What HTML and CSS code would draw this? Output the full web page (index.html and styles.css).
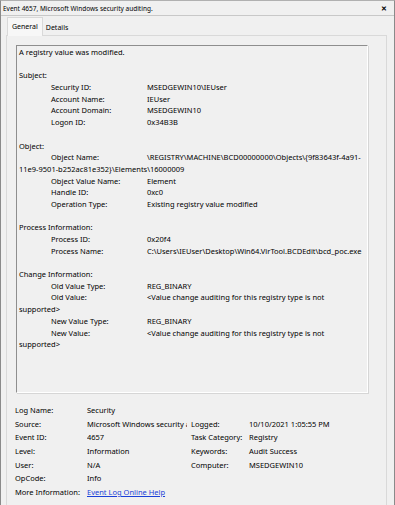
FILE: index.html
```html
<!DOCTYPE html>
<html>
<head>
<meta charset="utf-8">
<link rel="stylesheet" href="styles.css">
</head>
<body>
<div class="window">
  <div class="titlebar">
    <span class="title">Event 4657, Microsoft Windows security auditing.</span>
    <span class="close">&#x2715;</span>
  </div>
  <div class="tabs">
    <div class="tab active">General</div>
    <div class="tab">Details</div>
  </div>
  <div class="panel">
    <div class="textbox">
      <div class="ln">A registry value was modified.</div>
      <div class="ln">&nbsp;</div>
      <div class="ln">Subject:</div>
      <div class="ln"><span class="ind"></span><span class="lbl">Security ID:</span>MSEDGEWIN10\IEUser</div>
      <div class="ln"><span class="ind"></span><span class="lbl">Account Name:</span>IEUser</div>
      <div class="ln"><span class="ind"></span><span class="lbl">Account Domain:</span>MSEDGEWIN10</div>
      <div class="ln"><span class="ind"></span><span class="lbl">Logon ID:</span>0x34B3B</div>
      <div class="ln">&nbsp;</div>
      <div class="ln">Object:</div>
      <div class="ln"><span class="ind"></span><span class="lbl">Object Name:</span>\REGISTRY\MACHINE\BCD00000000\Objects\{9f83643f-4a91-<br>11e9-9501-b252ac81e352}\Elements\16000009</div>
      <div class="ln"><span class="ind"></span><span class="lbl">Object Value Name:</span>Element</div>
      <div class="ln"><span class="ind"></span><span class="lbl">Handle ID:</span>0xc0</div>
      <div class="ln"><span class="ind"></span><span class="lbl">Operation Type:</span>Existing registry value modified</div>
      <div class="ln">&nbsp;</div>
      <div class="ln">Process Information:</div>
      <div class="ln"><span class="ind"></span><span class="lbl">Process ID:</span>0x20f4</div>
      <div class="ln"><span class="ind"></span><span class="lbl">Process Name:</span>C:\Users\IEUser\Desktop\Win64.VirTool.BCDEdit\bcd_poc.exe</div>
      <div class="ln">&nbsp;</div>
      <div class="ln">Change Information:</div>
      <div class="ln"><span class="ind"></span><span class="lbl">Old Value Type:</span>REG_BINARY</div>
      <div class="ln"><span class="ind"></span><span class="lbl">Old Value:</span>&lt;Value change auditing for this registry type is not<br>supported&gt;</div>
      <div class="ln"><span class="ind"></span><span class="lbl">New Value Type:</span>REG_BINARY</div>
      <div class="ln"><span class="ind"></span><span class="lbl">New Value:</span>&lt;Value change auditing for this registry type is not<br>supported&gt;</div>
    </div>
    <div class="details">
      <div class="col-left">
        <div class="row"><span class="k">Log Name:</span><span class="v">Security</span></div>
        <div class="row"><span class="k">Source:</span><span class="v clip">Microsoft Windows security auditing.</span></div>
        <div class="row"><span class="k">Event ID:</span><span class="v">4657</span></div>
        <div class="row"><span class="k">Level:</span><span class="v">Information</span></div>
        <div class="row"><span class="k">User:</span><span class="v">N/A</span></div>
        <div class="row"><span class="k">OpCode:</span><span class="v">Info</span></div>
        <div class="row"><span class="k">More Information:</span><span class="v"><a class="link" href="#">Event Log Online Help</a></span></div>
      </div>
      <div class="col-right">
        <div class="row"><span class="k2">Logged:</span><span class="v">10/10/2021 1:05:55 PM</span></div>
        <div class="row"><span class="k2">Task Category:</span><span class="v">Registry</span></div>
        <div class="row"><span class="k2">Keywords:</span><span class="v">Audit Success</span></div>
        <div class="row"><span class="k2">Computer:</span><span class="v">MSEDGEWIN10</span></div>
      </div>
    </div>
  </div>
</div>
</body>
</html>
```

FILE: styles.css
```css
html, body {
  margin: 0;
  padding: 0;
  background: #f0f0f0;
}
body {
  font-family: "Noto Sans", "Open Sans", sans-serif;
  font-size: 7.5px;
  color: #000;
}
.window {
  width: 395px;
  height: 505px;
  box-sizing: border-box;
  border-left: 1px solid #8a8a8a;
  border-right: 1px solid #8a8a8a;
  border-top: 1px solid #b0b0b0;
  background: #f0f0f0;
  display: flex;
  flex-direction: column;
  overflow: hidden;
}
.titlebar {
  height: 14px;
  border-bottom: 1px solid #c8c8c8;
  display: flex;
  align-items: center;
  justify-content: space-between;
  padding: 0 7px 0 2px;
  flex: none;
}
.title {
  font-size: 6.5px;
}
.close {
  font-size: 7px;
  font-weight: bold;
}
.tabs {
  display: flex;
  align-items: flex-end;
  padding-left: 6px;
  height: 19px;
  flex: none;
}
.tab {
  padding: 0 3px;
  height: 15px;
  line-height: 15px;
  font-size: 7px;
}
.tab.active {
  height: 18px;
  line-height: 17px;
  background: #f7f7f7;
  border: 1px solid #d9d9d9;
  border-bottom: none;
  padding: 0 4px;
  margin-bottom: -1px;
  position: relative;
  z-index: 1;
}
.panel {
  flex: 1;
  margin: 0 7px 0 5px;
  border: 1px solid #d9d9d9;
  border-bottom: none;
  background: #f0f0f0;
  padding: 9px 0 0 9px;
  display: flex;
  flex-direction: column;
}
.textbox {
  width: 352px;
  height: 348px;
  box-sizing: border-box;
  border-top: 1px solid #8e8e8e;
  border-left: 1px solid #8e8e8e;
  border-right: 1px solid #ffffff;
  border-bottom: 1px solid #ffffff;
  box-shadow: 1px 1px 0 #d6d6d6;
  padding: 1px 0 0 2px;
  line-height: 11.68px;
  white-space: nowrap;
}
.ind {
  display: inline-block;
  width: 32px;
}
.lbl {
  display: inline-block;
  width: 96px;
}
.details {
  display: flex;
  padding-top: 11px;
  margin-left: -1px;
}
.row {
  height: 13.7px;
  line-height: 13.7px;
  display: flex;
  white-space: nowrap;
}
.col-left .k {
  width: 72px;
  flex: none;
}
.col-left .v {
  width: 100px;
  flex: none;
  overflow: hidden;
}
.col-right {
  padding-left: 4px;
  padding-top: 13.7px;
}
.k2 {
  width: 58px;
  flex: none;
}
.link {
  color: #1a3fd8;
  text-decoration: underline;
}
```
